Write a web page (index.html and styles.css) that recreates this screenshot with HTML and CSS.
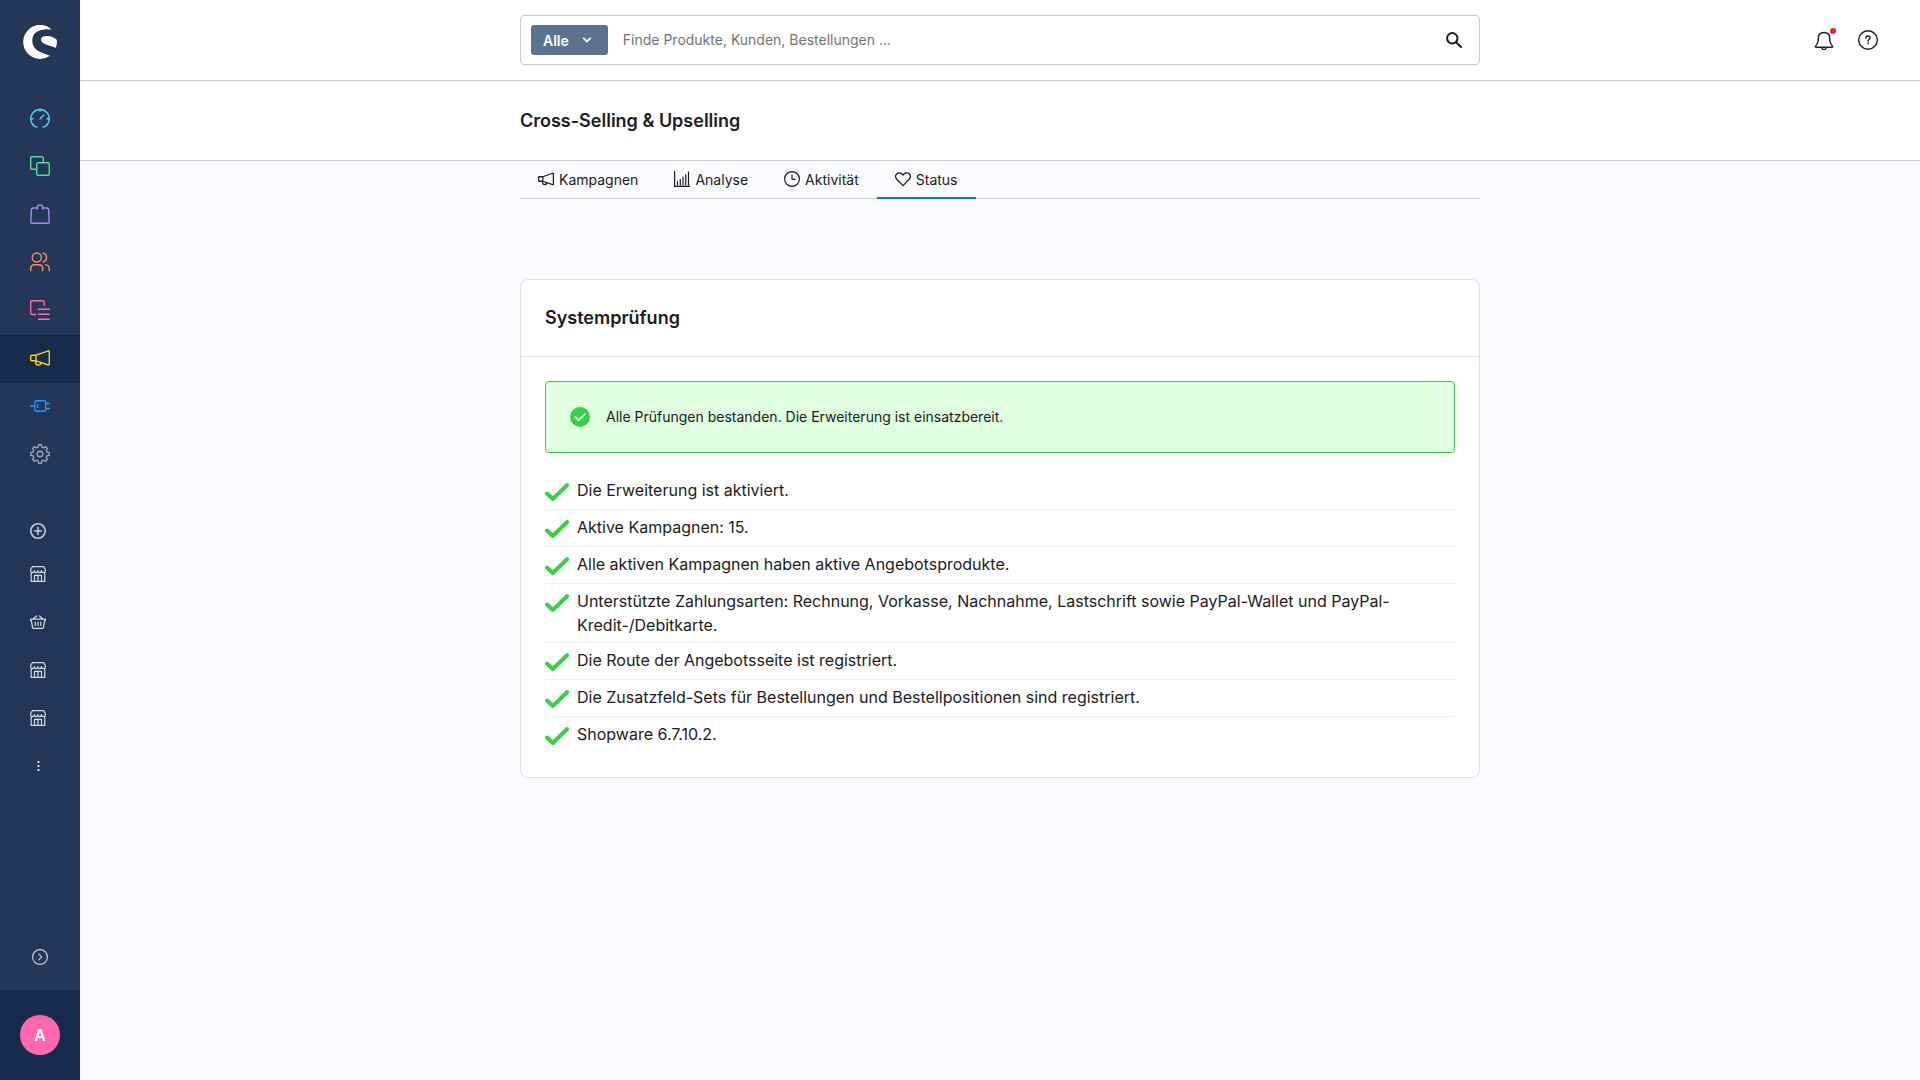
FILE: index.html
```html
<!DOCTYPE html>
<html lang="de">
<head>
  <meta charset="UTF-8">
  <meta name="viewport" content="width=device-width, initial-scale=1">
  <title>Cross-Selling &amp; Upselling</title>
  <link rel="stylesheet" href="styles.css">
</head>
<body>

  <!-- shared icons -->
  <svg class="sprite" aria-hidden="true">
    <symbol id="megaphone" viewBox="0 0 20 20">
      <path d="M.7 6.700q0-1 1-1H6v5.600H1.700q-1 0-1-1zM6 5.700 18.300 1.300q1 0 1 1v12.200q0 1-1 1L6 11.300M5.700 11.300v2q0 2 2.500 2.300 2.600 0 2.800-2.600" transform="translate(0 1.500)"/>
    </symbol>
    <symbol id="store" viewBox="0 0 16 16">
      <path d="M2.500.6h11l1.900 2.900v1.300q-.3 1.800-2 1.800-1.900 0-2-2-.2 2-1.800 2-1.500 0-1.700-2-.2 2-1.800 2T4.400 4.600q-.1 2-2 2-1.500 0-1.800-1.800V3.500zM1.200 6.300v9.100h13.600V6.300M4.500 15.400V9.300h7v6.100M8 9.300v6.100"/>
    </symbol>
    <symbol id="check" viewBox="0 0 24 24">
      <path d="m2 13.500 5.800 5.500L22 5.200"/>
    </symbol>
  </svg>

  <aside class="sidebar">
    <a class="logo" href="#" aria-label="Shopware">
      <svg viewBox="0 0 34 34" width="34" height="34">
        <path d="M28.500 4.200A17 17 0 1 0 27 30.800C20 28 9.300 26 9.300 15.500 9.300 8 15 4.700 22 4.400c2-.1 4 .1 6.500-.2z"/>
        <path d="M18 14.500c.1-2.400 2.800-3.500 6-3.500 4 0 7.200 1.500 9.700 3.800.5 2.700.1 5.700-1 8.200C28 20.500 17.500 19.500 18 14.500z"/>
      </svg>
    </a>

    <nav class="main-nav">
      <a class="nav-item dashboard" href="#" aria-label="Dashboard">
        <svg class="icon" viewBox="0 0 20 20"><path d="M7 18.700q-.8.500-2 0A9.300 9.300 0 1 1 15 18.700q-1.200.5-2 0M10 1v2.200M1 10.700h2M17 10.700h2M10 11l3.800-4"/></svg>
      </a>
      <a class="nav-item catalogue" href="#" aria-label="Kataloge">
        <svg class="icon" viewBox="0 0 20 20"><rect x="6.700" y="6.700" width="12.600" height="12.600" rx="1.500"/><path d="M6.500 13.300H2.200q-1.500 0-1.500-1.500V2.200Q.7.700 2.200.7h9.600q1.500 0 1.500 1.500v4"/></svg>
      </a>
      <a class="nav-item orders" href="#" aria-label="Bestellungen">
        <svg class="icon" viewBox="0 0 20 20"><path d="M4.700 4H3Q1.500 4 1.400 5.500L.8 17.700q-.1 1.600 1.400 1.600h15.600q1.500 0 1.400-1.600L18.600 5.500Q18.500 4 17 4h-1.700M7.300 5V3.500Q7.500.9 10 .9t2.700 2.600V5M7.300 4h-1M12.700 4h1"/></svg>
      </a>
      <a class="nav-item customers" href="#" aria-label="Kunden">
        <svg class="icon" viewBox="0 0 20 20"><circle cx="6.800" cy="5.500" r="4.500"/><path d="M.7 18.800v-2.500q.2-3.600 4-3.600h4q3.800 0 4 3.600v2.500M13 1.100a4.500 4.500 0 0 1 0 8.800M15.600 12.900q3.700.3 3.700 4v1.900"/></svg>
      </a>
      <a class="nav-item content" href="#" aria-label="Inhalte">
        <svg class="icon" viewBox="0 0 20 20"><path d="M5.500 14.500H2.200q-1.500 0-1.500-1.500V2.200Q.7.700 2.200.7h10.600q1.500 0 1.500 1.500v3.300M8.500 9.300h10.800M8.500 14.300h10.800M8.500 19.300h10.800"/></svg>
      </a>
      <a class="nav-item marketing active" href="#" aria-label="Marketing" aria-current="page">
        <svg class="icon"><use href="#megaphone"/></svg>
      </a>
      <a class="nav-item extensions" href="#" aria-label="Erweiterungen">
        <svg class="icon" viewBox="0 0 20 20"><path d="M.5 10h4M7 4.700h7q1.700 0 1.700 1.700v7.200q0 1.700-1.700 1.700H7q-2.300-.3-2.300-2.500V7.200q0-2.200 2.300-2.500zM7.700 8.500v3M15.700 7.500h3.600M15.700 12.500h3.600"/></svg>
      </a>
      <a class="nav-item settings" href="#" aria-label="Einstellungen">
        <svg class="icon" viewBox="0 0 20 20"><circle cx="10" cy="10" r="2.800"/><path d="M8.700.8h2.600l.7 2.400 1.300.6 2.200-1.200 1.900 1.900-1.200 2.200.6 1.300 2.400.7v2.600l-2.400.7-.6 1.300 1.200 2.200-1.900 1.900-2.200-1.200-1.300.6-.7 2.400H8.700L8 16.800l-1.300-.6-2.200 1.200-1.900-1.900 1.200-2.200L3.200 12l-2.400-.7V8.700L3.200 8l.6-1.300-1.200-2.200 1.900-1.900 2.200 1.200L8 3.200z"/></svg>
      </a>
    </nav>

    <nav class="channels">
      <button class="channel-add" type="button" aria-label="Verkaufskanal hinzufügen">
        <svg class="icon-small thick" viewBox="0 0 16 16"><circle cx="8" cy="8" r="7.200"/><path d="M8 4.500v7M4.500 8h7"/></svg>
      </button>
      <a class="channel" href="#" aria-label="Storefront"><svg class="icon-small"><use href="#store"/></svg></a>
      <a class="channel" href="#" aria-label="Headless">
        <svg class="icon-small" viewBox="0 0 16 16"><path d="M.6 5.100h14.800v1.500h-.7l-1.300 7q-.2.800-1 .8H3.600q-.8 0-1-.8l-1.300-7H.6zM3.200 5 6.500 2M12.800 5 9.500 2M5.200 8v3.500M8 8v3.500M10.800 8v3.500"/></svg>
      </a>
      <a class="channel" href="#" aria-label="Storefront 2"><svg class="icon-small"><use href="#store"/></svg></a>
      <a class="channel" href="#" aria-label="Storefront 3"><svg class="icon-small"><use href="#store"/></svg></a>
      <a class="channel" href="#" aria-label="Mehr">
        <svg class="icon-small dots" viewBox="0 0 16 16"><circle cx="8.500" cy="4" r="1.100"/><circle cx="8.500" cy="8" r="1.100"/><circle cx="8.500" cy="12" r="1.100"/></svg>
      </a>
    </nav>

    <button class="collapse" type="button" aria-label="Menü ausklappen">
      <svg class="icon-small" viewBox="0 0 16 16"><circle cx="8" cy="8" r="7.400"/><path d="m6.900 5.200 2.800 2.800-2.800 2.800"/></svg>
    </button>

    <div class="user">
      <button class="avatar" type="button">A</button>
    </div>
  </aside>

  <div class="page">
    <header class="topbar">
      <form class="search" role="search">
        <button class="search-type" type="button">
          Alle
          <svg viewBox="0 0 10 10" width="10" height="10"><path d="m1.800 3.300 3.200 3.200 3.200-3.200"/></svg>
        </button>
        <input class="search-input" type="text" placeholder="Finde Produkte, Kunden, Bestellungen ..." aria-label="Suche">
        <button class="search-submit" type="submit" aria-label="Suchen">
          <svg viewBox="0 0 16 16" width="16" height="16"><circle cx="6.300" cy="6.300" r="5.200"/><path d="m10.200 10.200 4.800 4.800"/></svg>
        </button>
      </form>
      <div class="actions">
        <button class="action notifications" type="button" aria-label="Benachrichtigungen">
          <svg class="icon" viewBox="0 0 20 20"><path d="M2 17.300q-.9-.2-.4-1.200c1.800-2 2.600-3.500 2.700-6.300V8Q4.500 2.600 10 2.500q5.500.1 5.700 5.500v1.800c.1 2.800.9 4.300 2.700 6.300q.5 1-.4 1.200zM8 18q.6 1.700 2 1.700t2-1.700"/></svg>
          <span class="badge"></span>
        </button>
        <button class="action" type="button" aria-label="Hilfe">
          <svg class="icon" viewBox="0 0 20 20"><circle cx="10" cy="10" r="9.300"/><path d="M7.900 8q0-2 2.200-2 2 0 2 1.800 0 1.100-1.100 1.700-.9.500-.9 1.600v.2M10.100 13v.8"/></svg>
        </button>
      </div>
    </header>

    <div class="titlebar">
      <h1>Cross-Selling &amp; Upselling</h1>
    </div>

    <main class="content-area">
      <nav class="tabs">
        <a class="tab" href="#">
          <svg class="icon-small thick"><use href="#megaphone"/></svg>
          Kampagnen
        </a>
        <a class="tab" href="#">
          <svg class="icon-small" viewBox="0 0 16 16"><path d="M.6 0v15.400H16M3.500 10.500v3.500M6.300 8.500V14M9 6.200V14M11.700 3.800V14M14.500 1v13"/></svg>
          Analyse
        </a>
        <a class="tab" href="#">
          <svg class="icon-small" viewBox="0 0 16 16"><circle cx="8" cy="8" r="7.400"/><path d="M8 4v4.300h3"/></svg>
          Aktivität
        </a>
        <a class="tab active" href="#" aria-current="page">
          <svg class="icon-small" viewBox="0 0 16 16"><path d="M8 14.600 2 8.500C.3 6.700.3 4.500 1.700 3 3.500 1.200 6.400 1.600 8 4.200c1.600-2.600 4.500-3 6.300-1.200 1.400 1.500 1.400 3.700-.3 5.500z"/></svg>
          Status
        </a>
      </nav>

      <section class="card">
        <div class="card-header">
          <h2>Systemprüfung</h2>
        </div>
        <div class="card-body">
          <div class="alert" role="status">
            <svg viewBox="0 0 20 20" width="20" height="20"><circle cx="10" cy="10" r="10"/><path d="m5.200 10 3.300 3.200 6.300-6"/></svg>
            <p>Alle Prüfungen bestanden. Die Erweiterung ist einsatzbereit.</p>
          </div>

          <ul class="checks">
            <li><svg class="check"><use href="#check"/></svg><span>Die Erweiterung ist aktiviert.</span></li>
            <li><svg class="check"><use href="#check"/></svg><span>Aktive Kampagnen: 15.</span></li>
            <li><svg class="check"><use href="#check"/></svg><span>Alle aktiven Kampagnen haben aktive Angebotsprodukte.</span></li>
            <li><svg class="check"><use href="#check"/></svg><span>Unterstützte Zahlungsarten: Rechnung, Vorkasse, Nachnahme, Lastschrift sowie PayPal-Wallet und PayPal-Kredit-/Debitkarte.</span></li>
            <li><svg class="check"><use href="#check"/></svg><span>Die Route der Angebotsseite ist registriert.</span></li>
            <li><svg class="check"><use href="#check"/></svg><span>Die Zusatzfeld-Sets für Bestellungen und Bestellpositionen sind registriert.</span></li>
            <li><svg class="check"><use href="#check"/></svg><span>Shopware 6.7.10.2.</span></li>
          </ul>
        </div>
      </section>
    </main>
  </div>

</body>
</html>
```
FILE: styles.css
```css
* {
  box-sizing: border-box;
}
body {
  display: flex;
  min-height: 100vh;
  margin: 0;
  font-family: Inter, "Liberation Sans", sans-serif;
  font-size: 14px;
  color: #1c1c21;
  background-color: #fafbff;
}
h1, h2, p, ul {
  margin: 0;
  padding: 0;
}
h1, h2 {
  font-size: 18px;
  line-height: 28px;
  font-weight: 600;
}
button {
  padding: 0;
  border: none;
  background: none;
  font-family: inherit;
  color: inherit;
  cursor: pointer;
}
a {
  color: inherit;
  text-decoration: none;
}
svg {
  display: block;
  flex: none;
  fill: none;
  stroke: currentColor;
  stroke-linecap: round;
  stroke-linejoin: round;
}
.sprite {
  position: absolute;
  width: 0;
  height: 0;
}
.icon {
  width: 20px;
  height: 20px;
  stroke-width: 1.400;
}
.icon-small {
  width: 16px;
  height: 16px;
  stroke-width: 1.200;
}
.thick {
  stroke-width: 1.600;
}

/* sidebar */
.sidebar {
  position: sticky;
  top: 0;
  display: flex;
  flex: none;
  flex-direction: column;
  width: 80px;
  height: 100vh;
  background-color: #243758;
  color: #d1d9e0;
}
.logo {
  display: flex;
  justify-content: center;
  padding: 25px 0 36px;
}
.logo svg {
  fill: #fff;
  stroke: none;
}
.nav-item {
  display: flex;
  align-items: center;
  justify-content: center;
  height: 48px;
  padding-bottom: 2px;
}
.nav-item.active {
  background-color: #172b4d;
}
.dashboard { color: #5cc8eb; }
.catalogue { color: #57d9a3; }
.orders { color: #a092f0; }
.customers { color: #f88962; }
.content { color: #ff68ac; }
.marketing { color: #ffd700; }
.extensions { color: #189eff; }
.settings { color: #98a5b5; }

.channels {
  display: flex;
  flex-direction: column;
  margin-top: 33px;
  padding-left: 30px;
}
.channel-add {
  display: flex;
  align-items: center;
  height: 38px;
  color: #bccbe0;
}
.channel {
  display: flex;
  align-items: center;
  height: 48px;
}
.dots {
  fill: #fff;
  stroke: none;
}
.collapse {
  display: flex;
  align-items: center;
  justify-content: center;
  height: 48px;
  margin-top: auto;
  margin-bottom: 9px;
  color: #bccbe0;
}
.user {
  display: flex;
  align-items: center;
  justify-content: center;
  height: 90px;
  background-color: #172b4d;
}
.avatar {
  width: 40px;
  height: 40px;
  border-radius: 50%;
  background-color: #ff68ac;
  color: #fff;
  font-size: 16px;
  font-weight: 600;
}

/* top bar */
.page {
  flex: 1;
  min-width: 0;
}
.topbar {
  display: grid;
  grid-template-columns: 1fr minmax(0, 960px) 1fr;
  align-items: center;
  height: 81px;
  border-bottom: 1px solid #cacad2;
  background-color: #fff;
}
.search {
  display: flex;
  grid-column: 2;
  align-items: center;
  height: 50px;
  padding: 0 17px 0 10px;
  border: 1px solid #cacad2;
  border-radius: 4px;
}
.search-type {
  display: flex;
  align-items: center;
  gap: 13px;
  height: 30px;
  padding: 0 16px 0 12px;
  border-radius: 3px;
  background-color: #5c7390;
  color: #fff;
  font-size: 14px;
  font-weight: 600;
}
.search-type svg {
  stroke-width: 1.800;
}
.search-input {
  flex: 1;
  min-width: 0;
  padding: 0 15px 2px;
  border: none;
  outline: none;
  background: none;
  color: inherit;
  font-family: inherit;
  font-size: 14px;
}
.search-input::placeholder {
  color: #757575;
}
.search-submit svg {
  stroke-width: 2;
}
.actions {
  display: flex;
  grid-column: 3;
  justify-content: flex-end;
  gap: 24px;
  padding-right: 42px;
}
.action {
  position: relative;
}
.badge {
  position: absolute;
  top: -2px;
  right: -2px;
  width: 6px;
  height: 6px;
  border-radius: 50%;
  background-color: #e3262f;
}
.titlebar {
  height: 80px;
  padding: 26px 24px;
  border-bottom: 1px solid #cacad2;
  background-color: #fff;
}
.titlebar h1 {
  max-width: 960px;
  margin: 0 auto;
}

/* content */
.content-area {
  max-width: 960px;
  margin: 0 auto;
}
.tabs {
  display: flex;
  height: 38px;
  margin-bottom: 80px;
  box-shadow: inset 0 -1px #cacad2;
}
.tab {
  display: flex;
  align-items: center;
  gap: 5px;
  padding: 0 18px;
  border-bottom: 2px solid transparent;
}
.tab.active {
  border-bottom-color: #0870ff;
}
.card {
  border: 1px solid #dfe0e9;
  border-radius: 8px;
  background-color: #fff;
}
.card-header {
  padding: 24px;
  border-bottom: 1px solid #dfe0e9;
}
.card-body {
  padding: 24px;
}
.alert {
  display: flex;
  align-items: center;
  gap: 16px;
  min-height: 72px;
  margin-bottom: 20px;
  padding: 0 24px;
  border: 1px solid #37d046;
  border-radius: 4px;
  background-color: #e0fee0;
  line-height: 20px;
}
.alert svg {
  color: #e0fee0;
  stroke-width: 2;
}
.alert circle {
  fill: #37d046;
  stroke: none;
}
.checks {
  list-style: none;
  font-size: 16px;
  line-height: 24px;
}
.checks li {
  display: flex;
  align-items: flex-start;
  gap: 8px;
  padding: 5px 0;
  border-bottom: 1px solid #f0f1f5;
}
.checks li:last-child {
  border-bottom: none;
}
.check {
  width: 24px;
  height: 24px;
  margin-top: 2px;
  color: #37d046;
  stroke-width: 4;
}
```
